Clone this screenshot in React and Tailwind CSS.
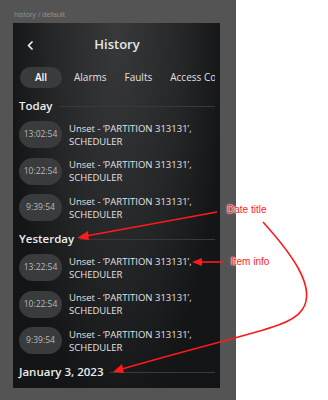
import React from "react";

const sections = [
  { title: "Today", times: ["13:02:54", "10:22:54", "9:39:54"] },
  { title: "Yesterday", times: ["13:22:54", "10:22:54", "9:39:54"] },
  { title: "January 3, 2023", times: [] },
];

function SectionTitle({ title }) {
  return (
    <div className="flex items-center gap-[6px] h-4 mt-[10px]">
      <span className="text-[11.5px] font-semibold text-[#ececec] whitespace-nowrap leading-4">{title}</span>
      <div className="flex-1 h-px bg-[#38393b]" />
    </div>
  );
}

function Row({ time }) {
  return (
    <div className="flex items-center gap-[7px]">
      <div className="w-[43px] h-[27px] rounded-full bg-[#3a3b3d] flex items-center justify-center text-[8.5px] text-[#b9b9b9] shrink-0">
        {time}
      </div>
      <div className="text-[9.5px] leading-[13px] text-[#e2e2e2] font-medium">
        <div className="whitespace-nowrap">Unset - ‘PARTITION 313131’,</div>
        <div>SCHEDULER</div>
      </div>
    </div>
  );
}

export default function App() {
  return (
    <div
      className="relative w-[328px] h-[400px] flex bg-white overflow-hidden"
      style={{ fontFamily: '"Open Sans", "Noto Sans", sans-serif' }}
    >
      <div className="w-[236px] h-full bg-[#545454] pl-[13px] pt-[10px]">
        <div className="text-[7.5px] leading-[10px] text-[#8e8e8e] pl-px mb-[3px]" style={{ fontFamily: '"Liberation Sans", sans-serif' }}>
          history / default
        </div>
        <div className="w-[207px] h-[365px] overflow-hidden bg-[radial-gradient(ellipse_at_50%_0%,#38393b_0%,#252628_45%,#141517_75%,#131416_100%)] px-[6px] pr-[5px]">
          {/* header */}
          <div className="relative h-[44px] flex items-center justify-center">
            <svg className="absolute left-[8px] top-[18px]" width="6" height="9" viewBox="0 0 6 9">
              <path d="M5 1 L1.5 4.5 L5 8" fill="none" stroke="#f2f2f2" strokeWidth="1.7" strokeLinecap="round" strokeLinejoin="round" />
            </svg>
            <span className="text-[13px] font-semibold text-[#e6e6e6]">History</span>
          </div>
          {/* tabs */}
          <div className="flex items-center h-[21px] text-[10px] text-[#e0e0e0] whitespace-nowrap overflow-hidden">
            <div className="w-[42px] h-[21px] rounded-full bg-[#3a3b3d] flex items-center justify-center ml-px font-semibold text-white shrink-0">All</div>
            <span className="ml-[12px]">Alarms</span>
            <span className="ml-[18px]">Faults</span>
            <span className="ml-[18px]">Access Co</span>
          </div>
          {sections.map((s) => (
            <div key={s.title}>
              <SectionTitle title={s.title} />
              {s.times.length > 0 && (
                <div className="flex flex-col gap-[9.5px] mt-[7px]">
                  {s.times.map((t, i) => (
                    <Row key={i} time={t} />
                  ))}
                </div>
              )}
            </div>
          ))}
        </div>
      </div>

      {/* annotations */}
      <svg className="absolute inset-0 pointer-events-none" width="328" height="400">
        <g stroke="#ff1a1a" strokeWidth="1.6" fill="none">
          <path d="M217 212 L86 236" />
          <path d="M224 262 L200 262" />
          <path d="M263 222 C290 252 318 288 302 310 C290 328 250 332 122 369" />
        </g>
        <g fill="#ff1a1a">
          <path d="M77 238 L88 231 L89 240 Z" />
          <path d="M192 262 L202 258 L202 266 Z" />
          <path d="M113 372 L122 364 L124 373 Z" />
        </g>
      </svg>
      <div
        className="absolute left-[227px] top-[204px] text-[10px] leading-[12px] text-[#ff2222]"
        style={{ fontFamily: '"Liberation Sans", sans-serif', textShadow: "0 0 2px #fff, 0 0 2px #fff, 0 0 1px #fff" }}
      >
        Date title
      </div>
      <div
        className="absolute left-[231px] top-[256px] text-[10px] leading-[12px] text-[#ff2222]"
        style={{ fontFamily: '"Liberation Sans", sans-serif', textShadow: "0 0 2px #fff, 0 0 2px #fff, 0 0 1px #fff" }}
      >
        Item info
      </div>
    </div>
  );
}
